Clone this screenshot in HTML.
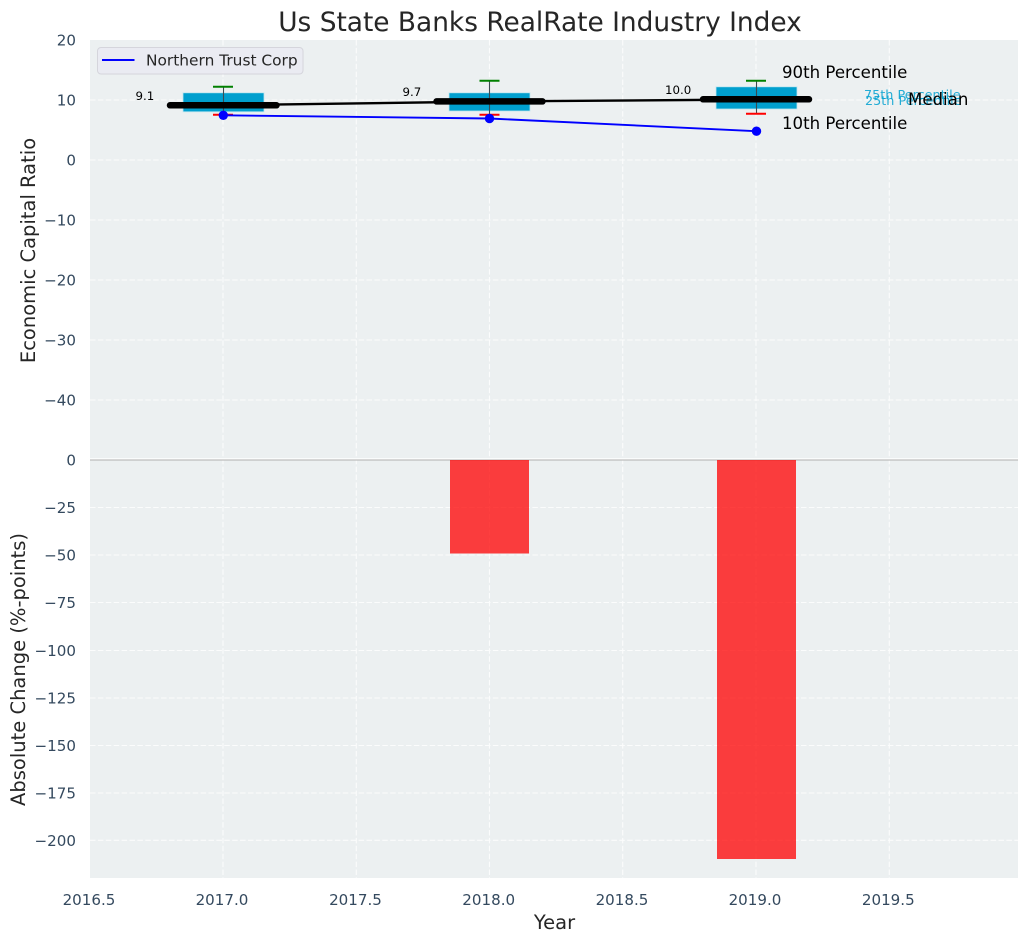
<!DOCTYPE html>
<html><head><meta charset="utf-8"><style>
html,body{margin:0;padding:0;background:#fff}
svg{display:block}
text{font-family:"DejaVu Sans",sans-serif}
.t{fill:#34495e;font-size:15.1px}
.g{stroke:#fff;stroke-width:1.1;stroke-dasharray:5.5 2.4;opacity:.8}
</style></head><body>
<svg width="1029" height="942" viewBox="0 0 1029 942" xmlns="http://www.w3.org/2000/svg">
<rect x="90" y="40" width="928" height="838" fill="#ecf0f1"/>
<g class="g" fill="none">
<path d="M90 100H1018M90 160H1018M90 220H1018M90 280H1018M90 340H1018M90 400H1018"/>
<path d="M90 507.5H1018M90 555H1018M90 602.5H1018M90 650.5H1018M90 698H1018M90 745.5H1018M90 793H1018M90 840.3H1018"/>
<path d="M223 40V878M356.3 40V878M489.5 40V878M622.7 40V878M756 40V878M889.3 40V878"/>
</g>
<line x1="90" x2="1018" y1="459" y2="459" stroke="#fff" stroke-width="1.5"/>
<line x1="90" x2="1018" y1="460" y2="460" stroke="#bdbdbd" stroke-width="1.3"/>

<!-- bars -->
<rect x="450" y="460" width="79" height="93.5" fill="#ff0000" fill-opacity=".75"/>
<rect x="717" y="460" width="79" height="399" fill="#ff0000" fill-opacity=".75"/>

<!-- boxes -->
<g fill="#009fce" stroke="#bfe5ef" stroke-width=".8">
<rect x="183" y="92.8" width="81" height="19"/>
<rect x="449" y="92.8" width="81" height="18.2"/>
<rect x="716" y="86.8" width="81" height="22.2"/>
</g>
<!-- whiskers -->
<g stroke="#3c4a50" stroke-width="1.1">
<path d="M223.500 87V115M489.500 81V115M756.500 81V114"/>
</g>
<g stroke="#008000" stroke-width="2"><path d="M213 86.800H233M479.500 80.800H499.500M746 80.800H766"/></g>
<g stroke="#ff0000" stroke-width="2"><path d="M213 114.800H233M479.500 114.800H499.500M746 113.800H766"/></g>

<!-- black line -->
<polyline points="223,105.300 489.500,101.500 756,99.500" fill="none" stroke="#000" stroke-width="2.400"/>
<g stroke="#000" stroke-width="6.500" stroke-linecap="round">
<path d="M170 105.300H276.500M436.500 101.400H542.500M703 99.300H809"/>
</g>
<!-- blue -->
<polyline points="223,115.300 489.500,118.500 756,131.200" fill="none" stroke="#0000ff" stroke-width="1.900"/>
<g fill="#0000ff"><circle cx="223.300" cy="115.300" r="4.700"/><circle cx="489.500" cy="118.500" r="4.700"/><circle cx="756.500" cy="131.200" r="4.700"/></g>

<!-- annotations -->
<g fill="#000" style="font-size:11.800px">
<text x="135.500" y="100">9.1</text>
<text x="402.500" y="96">9.7</text>
<text x="665" y="94">10.0</text>
</g>
<g style="font-size:16.600px" fill="#000">
<text x="782" y="78">90th Percentile</text>
<text x="782" y="129">10th Percentile</text>
</g>
<g style="font-size:12.800px" fill="#00a0d0" fill-opacity=".85">
<text x="864" y="99">75th Percentile</text>
<text x="865" y="105">25th Percentile</text>
</g>
<text x="908" y="105" style="font-size:16.600px" fill="#000">Median</text>

<!-- legend -->
<rect x="97.500" y="47.500" width="205.500" height="26.500" rx="3.500" fill="#eaeaf2" fill-opacity=".9" stroke="#d5d5dc" stroke-width="1"/>
<line x1="102" x2="134.500" y1="60" y2="60" stroke="#0000ff" stroke-width="1.900"/>
<text x="146" y="65.500" style="font-size:15.400px" fill="#262626">Northern Trust Corp</text>

<!-- title & labels -->
<text x="540" y="31" text-anchor="middle" style="font-size:26.400px" fill="#262626">Us State Banks RealRate Industry Index</text>
<text x="554.500" y="929" text-anchor="middle" style="font-size:19.500px" fill="#262626">Year</text>
<text transform="translate(35,250.500) rotate(-90)" text-anchor="middle" style="font-size:19.500px" fill="#262626">Economic Capital Ratio</text>
<text transform="translate(25,669.500) rotate(-90)" text-anchor="middle" style="font-size:19.500px" fill="#262626">Absolute Change (%-points)</text>

<!-- y ticks -->
<g class="t" text-anchor="end">
<text class="t" x="76" y="45.500">20</text>
<text class="t" x="76" y="105.500">10</text>
<text class="t" x="76" y="165.500">0</text>
<text class="t" x="76" y="225.500">−10</text>
<text class="t" x="76" y="285.500">−20</text>
<text class="t" x="76" y="345.500">−30</text>
<text class="t" x="76" y="405.500">−40</text>
<text class="t" x="76" y="465.500">0</text>
<text class="t" x="76" y="513">−25</text>
<text class="t" x="76" y="560.500">−50</text>
<text class="t" x="76" y="608">−75</text>
<text class="t" x="76" y="656">−100</text>
<text class="t" x="76" y="703.500">−125</text>
<text class="t" x="76" y="751">−150</text>
<text class="t" x="76" y="798.500">−175</text>
<text class="t" x="76" y="846">−200</text>
</g>
<!-- x ticks -->
<g text-anchor="middle">
<text class="t" x="89" y="905">2016.5</text>
<text class="t" x="222" y="905">2017.0</text>
<text class="t" x="355.500" y="905">2017.5</text>
<text class="t" x="488.700" y="905">2018.0</text>
<text class="t" x="622" y="905">2018.5</text>
<text class="t" x="755" y="905">2019.0</text>
<text class="t" x="888.300" y="905">2019.5</text>
</g>
</svg>
</body></html>
